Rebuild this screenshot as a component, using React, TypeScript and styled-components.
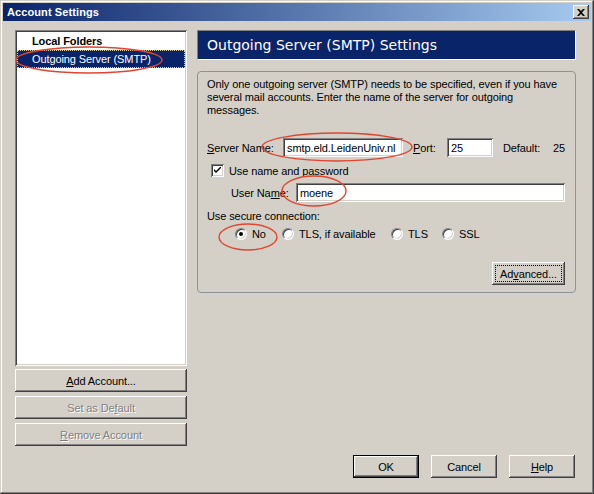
import React from "react";
import styled, { createGlobalStyle, css } from "styled-components";

const GlobalStyle = createGlobalStyle`
  html, body {
    margin: 0;
    padding: 0;
    background: #d4d0c8;
  }
  body {
    font-family: "Liberation Sans", Arial, sans-serif;
    font-size: 11px;
    letter-spacing: -0.1px;
    color: #000;
  }
  * {
    box-sizing: border-box;
  }
`;

const raised = css`
  box-shadow: inset -1px -1px #404040, inset 1px 1px #ffffff,
    inset -2px -2px #808080, inset 2px 2px #d4d0c8;
`;

const sunken = css`
  box-shadow: inset 1px 1px #808080, inset -1px -1px #ffffff,
    inset 2px 2px #404040, inset -2px -2px #d4d0c8;
`;

const Window = styled.div`
  position: relative;
  width: 594px;
  height: 494px;
  padding: 3px;
  display: flex;
  flex-direction: column;
  background: #d4d0c8;
  box-shadow: inset -1px -1px #404040, inset 1px 1px #d4d0c8,
    inset -2px -2px #808080, inset 2px 2px #ffffff;
`;

const TitleBar = styled.div`
  height: 18px;
  display: flex;
  align-items: center;
  justify-content: space-between;
  padding: 0 2px 0 2px;
  background: linear-gradient(to right, #0a246a, #a6caf0);
  color: #fff;
  font-weight: bold;
  font-size: 11px;
  letter-spacing: 0.1px;
`;

const TitleText = styled.span`
  padding-left: 2px;
`;

const CloseButton = styled.div`
  width: 16px;
  height: 14px;
  display: flex;
  align-items: center;
  justify-content: center;
  background: #d4d0c8;
  ${raised}
`;

const Body = styled.div`
  flex: 1;
  display: flex;
  flex-direction: column;
  padding: 9px 15px 13px 12px;
`;

const Main = styled.div`
  flex: 1;
  display: grid;
  grid-template-columns: 172px 379px;
  column-gap: 10px;
`;

const LeftColumn = styled.div`
  display: flex;
  flex-direction: column;
`;

const ListBox = styled.div`
  flex: 1;
  background: #fff;
  padding: 2px;
  ${sunken}
`;

const ListRow = styled.div<{ $selected?: boolean; $bold?: boolean }>`
  height: 18px;
  display: flex;
  align-items: center;
  padding-left: 14px;
  font-weight: ${(p) => (p.$bold ? "bold" : "normal")};
  color: ${(p) => (p.$selected ? "#fff" : "#000")};
  background: ${(p) => (p.$selected ? "#0a246a" : "transparent")};
  border: 1px dotted ${(p) => (p.$selected ? "#d8d0a8" : "transparent")};
`;

const ButtonStack = styled.div`
  display: flex;
  flex-direction: column;
  gap: 4px;
  margin-top: 3px;
`;

const Button = styled.button<{ $width?: number; $default?: boolean }>`
  width: ${(p) => (p.$width ? `${p.$width}px` : "100%")};
  height: 23px;
  padding: 3px;
  border: none;
  background: #d4d0c8;
  font-family: inherit;
  font-size: 11px;
  letter-spacing: inherit;
  color: #000;
  display: flex;
  align-items: center;
  justify-content: center;
  ${raised}
  ${(p) =>
    p.$default &&
    css`
      box-shadow: inset 0 0 0 1px #000, inset -2px -2px #404040,
        inset 2px 2px #ffffff, inset -3px -3px #808080, inset 3px 3px #d4d0c8;
    `}

  &:disabled {
    color: #808080;
    text-shadow: 1px 1px #ffffff;
  }
`;

const FocusRing = styled.span`
  flex: 1;
  align-self: stretch;
  display: flex;
  align-items: center;
  justify-content: center;
  border: 1px dotted #000;
`;

const RightColumn = styled.div`
  display: flex;
  flex-direction: column;
`;

const Header = styled.div`
  height: 30px;
  display: flex;
  align-items: center;
  padding-left: 9px;
  background: #0a246a;
  border: 1px solid;
  border-color: #808080 #ffffff #ffffff #808080;
  color: #fff;
  font-family: "DejaVu Sans", "Liberation Sans", sans-serif;
  font-size: 14px;
  letter-spacing: 0;
`;

const GroupBox = styled.div`
  margin-top: 11px;
  height: 222px;
  border: 1px solid #8f9393;
  border-radius: 4px;
  padding: 6px 10px 6px 9px;
  display: flex;
  flex-direction: column;
`;

const Description = styled.div`
  line-height: 13px;
  white-space: nowrap;
`;

const FieldRow = styled.div<{ $top: number; $indent?: number }>`
  display: flex;
  align-items: center;
  margin-top: ${(p) => p.$top}px;
  padding-left: ${(p) => p.$indent ?? 0}px;
  white-space: nowrap;
`;

const Label = styled.span<{ $width?: number; $gap?: number }>`
  width: ${(p) => (p.$width ? `${p.$width}px` : "auto")};
  margin-left: ${(p) => p.$gap ?? 0}px;
  flex-shrink: 0;
`;

const TextInput = styled.input<{ $width?: number }>`
  width: ${(p) => (p.$width ? `${p.$width}px` : "auto")};
  flex: ${(p) => (p.$width ? "none" : 1)};
  min-width: 0;
  height: 19px;
  border: none;
  outline: none;
  padding: 0 4px;
  background: #fff;
  font-family: inherit;
  font-size: 11px;
  letter-spacing: inherit;
  color: #000;
  ${sunken}
`;

const CheckBox = styled.span`
  width: 13px;
  height: 13px;
  margin-left: 4px;
  display: flex;
  align-items: center;
  justify-content: center;
  background: #fff;
  ${sunken}
`;

const RadioOption = styled.span<{ $width?: number }>`
  width: ${(p) => (p.$width ? `${p.$width}px` : "auto")};
  display: flex;
  align-items: center;
  gap: 5px;
`;

const Radio = styled.span<{ $checked?: boolean }>`
  width: 12px;
  height: 12px;
  border-radius: 50%;
  background: #fff;
  border: 1px solid;
  border-color: #808080 #ffffff #ffffff #808080;
  box-shadow: inset 1px 1px #404040, inset -1px -1px #d4d0c8;
  display: flex;
  align-items: center;
  justify-content: center;

  &::after {
    content: "";
    width: 4px;
    height: 4px;
    border-radius: 50%;
    background: ${(p) => (p.$checked ? "#000" : "transparent")};
  }
`;

const ActionRow = styled.div`
  display: flex;
  justify-content: flex-end;
  margin-top: 22px;
`;

const Footer = styled.div`
  display: flex;
  justify-content: flex-end;
  gap: 12px;
  margin-top: 9px;
  padding-right: 1px;
`;

const Annotations = styled.svg`
  position: absolute;
  left: 0;
  top: 0;
  pointer-events: none;
`;

const marks = [
  { cx: 89, cy: 60, rx: 73, ry: 13 },
  { cx: 337, cy: 147, rx: 75, ry: 14 },
  { cx: 314, cy: 191, rx: 32, ry: 15 },
  { cx: 248, cy: 237, rx: 29, ry: 13 },
];

const App = () => {
  return (
    <>
      <GlobalStyle />
      <Window>
        <TitleBar>
          <TitleText>Account Settings</TitleText>
          <CloseButton>
            <svg width="8" height="7" viewBox="0 0 8 7">
              <path d="M0 0 L2 0 L4 2 L6 0 L8 0 L5 3.5 L8 7 L6 7 L4 5 L2 7 L0 7 L3 3.5 Z" fill="#000" />
            </svg>
          </CloseButton>
        </TitleBar>

        <Body>
          <Main>
            <LeftColumn>
              <ListBox>
                <ListRow $bold>Local Folders</ListRow>
                <ListRow $selected>Outgoing Server (SMTP)</ListRow>
              </ListBox>
              <ButtonStack>
                <Button>
                  <u>A</u>dd Account...
                </Button>
                <Button disabled>
                  Set as De<u>f</u>ault
                </Button>
                <Button disabled>
                  <u>R</u>emove Account
                </Button>
              </ButtonStack>
            </LeftColumn>

            <RightColumn>
              <Header>Outgoing Server (SMTP) Settings</Header>
              <GroupBox>
                <Description>
                  Only one outgoing server (SMTP) needs to be specified, even if you have
                  <br />
                  several mail accounts. Enter the name of the server for outgoing
                  <br />
                  messages.
                </Description>

                <FieldRow $top={21}>
                  <Label $width={76}>
                    <u>S</u>erver Name:
                  </Label>
                  <TextInput $width={120} defaultValue="smtp.eld.LeidenUniv.nl" readOnly />
                  <Label $width={34} $gap={10}>
                    <u>P</u>ort:
                  </Label>
                  <TextInput $width={46} defaultValue="25" readOnly />
                  <Label $width={50} $gap={10}>
                    Default:
                  </Label>
                  <Label>25</Label>
                </FieldRow>

                <FieldRow $top={7}>
                  <CheckBox>
                    <svg width="7" height="7" viewBox="0 0 7 7">
                      <path d="M0 2 L0 4 L2 6 L7 1 L7 -1 L2 4 Z" fill="#000" />
                    </svg>
                  </CheckBox>
                  <Label $gap={5}>Use name and password</Label>
                </FieldRow>

                <FieldRow $top={6} $indent={24}>
                  <Label $width={65}>
                    User Na<u>m</u>e:
                  </Label>
                  <TextInput defaultValue="moene" readOnly />
                </FieldRow>

                <FieldRow $top={8}>Use secure connection:</FieldRow>

                <FieldRow $top={6} $indent={28}>
                  <RadioOption $width={47}>
                    <Radio $checked />
                    No
                  </RadioOption>
                  <RadioOption $width={109}>
                    <Radio />
                    TLS, if available
                  </RadioOption>
                  <RadioOption $width={51}>
                    <Radio />
                    TLS
                  </RadioOption>
                  <RadioOption>
                    <Radio />
                    SSL
                  </RadioOption>
                </FieldRow>

                <ActionRow>
                  <Button $width={73}>
                    <FocusRing>
                      Ad<u>v</u>anced...
                    </FocusRing>
                  </Button>
                </ActionRow>
              </GroupBox>
            </RightColumn>
          </Main>

          <Footer>
            <Button $width={66} $default>
              OK
            </Button>
            <Button $width={66}>Cancel</Button>
            <Button $width={66}>
              <u>H</u>elp
            </Button>
          </Footer>
        </Body>

        <Annotations width="594" height="494" viewBox="0 0 594 494">
          {marks.map((m, i) => (
            <ellipse
              key={i}
              cx={m.cx}
              cy={m.cy}
              rx={m.rx}
              ry={m.ry}
              fill="none"
              stroke="#e2452f"
              strokeWidth="1.4"
            />
          ))}
        </Annotations>
      </Window>
    </>
  );
};

export default App;
